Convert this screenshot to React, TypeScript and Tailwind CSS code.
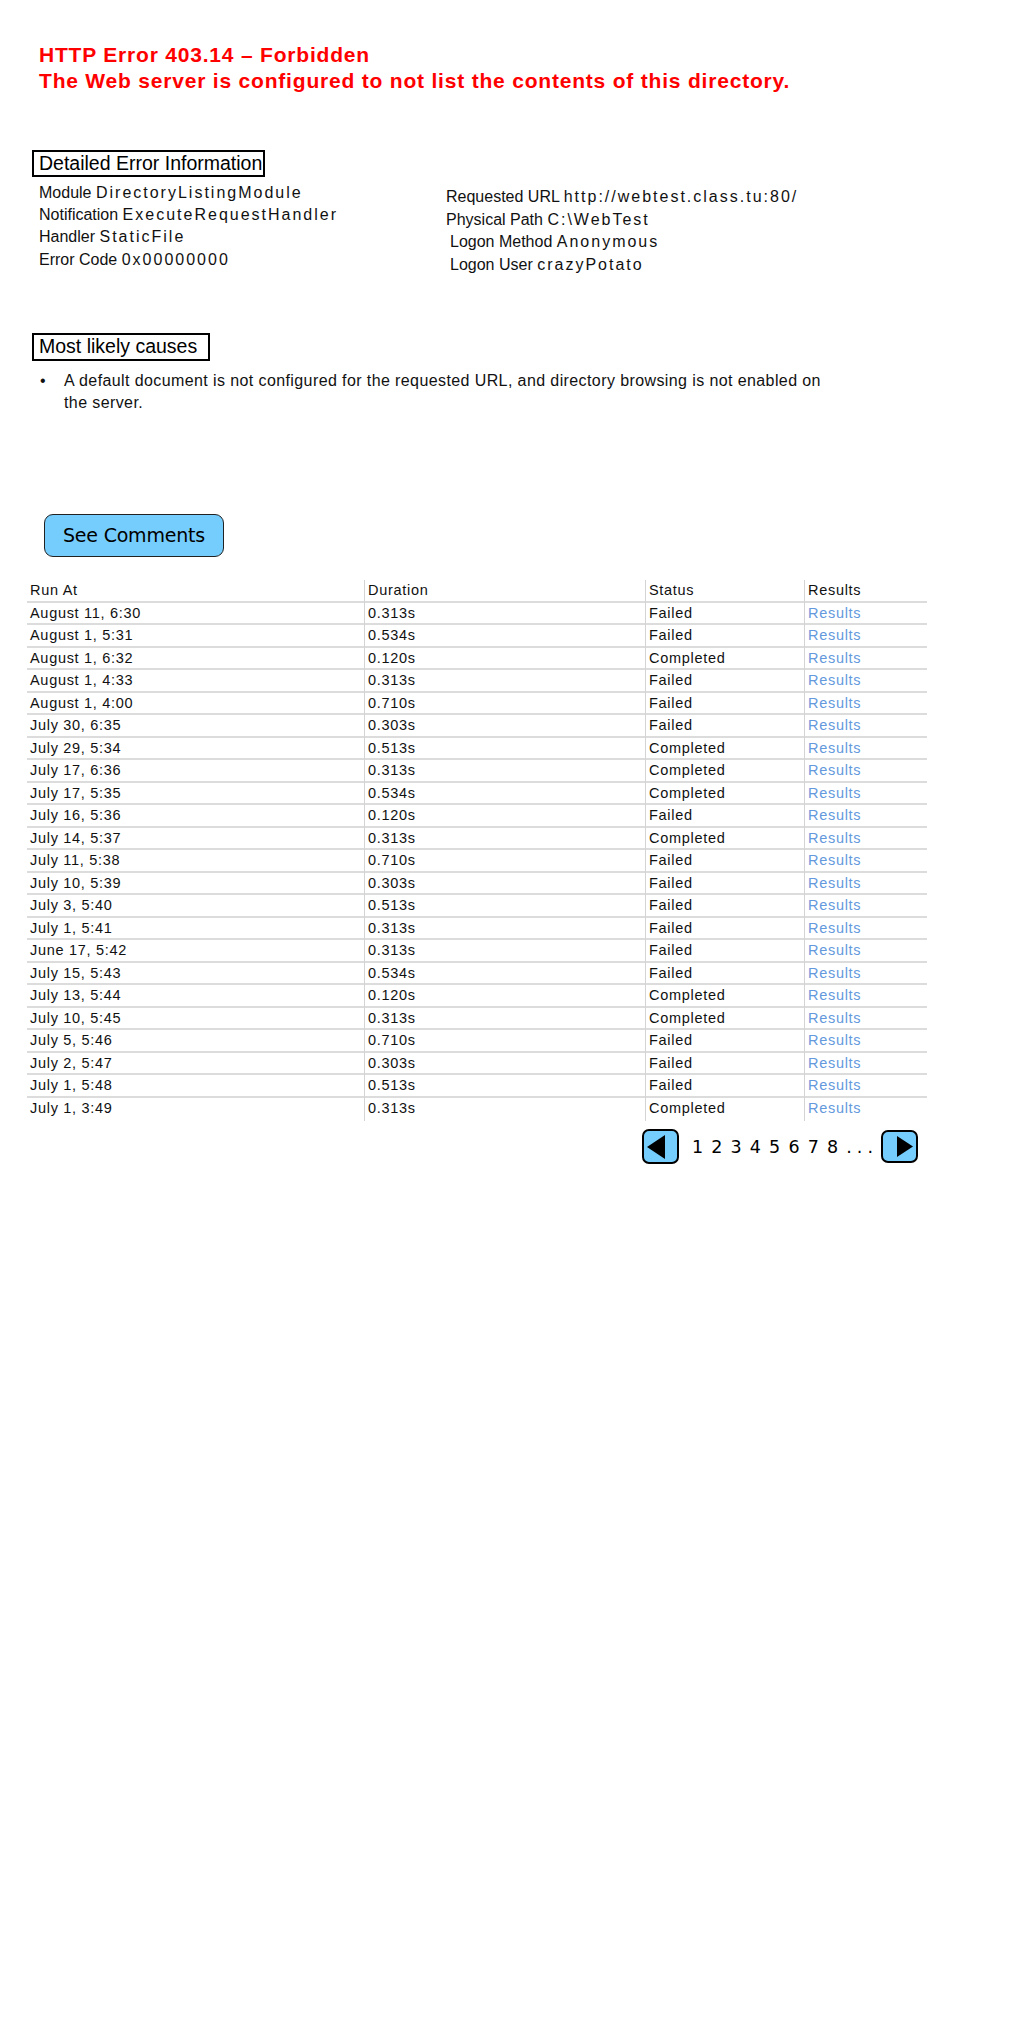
import React from "react";

const rows: [string, string, string][] = [
  ["August 11, 6:30", "0.313s", "Failed"],
  ["August 1, 5:31", "0.534s", "Failed"],
  ["August 1, 6:32", "0.120s", "Completed"],
  ["August 1, 4:33", "0.313s", "Failed"],
  ["August 1, 4:00", "0.710s", "Failed"],
  ["July 30, 6:35", "0.303s", "Failed"],
  ["July 29, 5:34", "0.513s", "Completed"],
  ["July 17, 6:36", "0.313s", "Completed"],
  ["July 17, 5:35", "0.534s", "Completed"],
  ["July 16, 5:36", "0.120s", "Failed"],
  ["July 14, 5:37", "0.313s", "Completed"],
  ["July 11, 5:38", "0.710s", "Failed"],
  ["July 10, 5:39", "0.303s", "Failed"],
  ["July 3, 5:40", "0.513s", "Failed"],
  ["July 1, 5:41", "0.313s", "Failed"],
  ["June 17, 5:42", "0.313s", "Failed"],
  ["July 15, 5:43", "0.534s", "Failed"],
  ["July 13, 5:44", "0.120s", "Completed"],
  ["July 10, 5:45", "0.313s", "Completed"],
  ["July 5, 5:46", "0.710s", "Failed"],
  ["July 2, 5:47", "0.303s", "Failed"],
  ["July 1, 5:48", "0.513s", "Failed"],
  ["July 1, 3:49", "0.313s", "Completed"],
];

export default function App() {
  return (
    <div className="min-h-[2040px] bg-white text-[#111] font-['Liberation_Sans',Arial,sans-serif] pt-[42px]">
      {/* Error heading */}
      <div className="ml-[39px] text-[21px] leading-[26px] font-bold tracking-[0.8px] text-[#ff0000]">
        <div>HTTP Error 403.14 – Forbidden</div>
        <div>The Web server is configured to not list the contents of this directory.</div>
      </div>

      {/* Detailed error information */}
      <SectionBox title="Detailed Error Information" className="mt-[56px] ml-[32px] w-[233px]" />
      <div className="flex mt-[5px] text-[16px]">
        <div className="ml-[39px] w-[407px] leading-[22.2px]">
          <InfoLine label="Module" value="DirectoryListingModule" />
          <InfoLine label="Notification" value="ExecuteRequestHandler" />
          <InfoLine label="Handler" value="StaticFile" />
          <InfoLine label="Error Code" value="0x00000000" />
        </div>
        <div className="mt-[4px] leading-[22.7px]">
          <InfoLine label="Requested URL" value="http://webtest.class.tu:80/" />
          <InfoLine label="Physical Path" value="C:\WebTest" />
          <InfoLine label="Logon Method" value="Anonymous" className="pl-[4px]" />
          <InfoLine label="Logon User" value="crazyPotato" className="pl-[4px]" />
        </div>
      </div>

      {/* Most likely causes */}
      <SectionBox title="Most likely causes" className="mt-[56px] ml-[32px] w-[178px] h-[28px]" />
      <div className="flex mt-[9px] text-[16px] leading-[22px] tracking-[0.4px]">
        <span className="ml-[40px] w-[24px]">•</span>
        <p className="w-[775px]">
          A default document is not configured for the requested URL, and directory browsing is not enabled on the server.
        </p>
      </div>

      <button className="mt-[100px] ml-[44px] w-[180px] h-[43px] rounded-[9px] border-[1.5px] border-[#222] bg-[#75cdfd] text-[19px] tracking-[-0.2px] text-black font-['DejaVu_Sans',Verdana,sans-serif]">
        See Comments
      </button>

      {/* Runs table */}
      <div className="mt-[23px] ml-[27px] w-[900px] text-[14.5px] tracking-[0.7px] text-[#111]">
        <div className="grid grid-cols-[337px_281px_159px_123px] h-[23px] border-b-2 border-[#dcdcdc]">
          <Cell first>Run At</Cell>
          <Cell>Duration</Cell>
          <Cell>Status</Cell>
          <Cell>Results</Cell>
        </div>
        {rows.map(([at, dur, status], i) => (
          <div
            key={i}
            className={
              "grid grid-cols-[337px_281px_159px_123px] h-[22.5px] " +
              (i < rows.length - 1 ? "border-b-2 border-[#dcdcdc]" : "")
            }
          >
            <Cell first>{at}</Cell>
            <Cell>{dur}</Cell>
            <Cell>{status}</Cell>
            <Cell>
              <span className="text-[#6499dd]">Results</span>
            </Cell>
          </div>
        ))}
      </div>

      {/* Pagination */}
      <div className="mt-[9px] ml-[27px] w-[900px] flex justify-end items-center pr-[9px]">
        <button className="w-[37px] h-[35px] rounded-[7px] border-2 border-black bg-[#75cdfd] flex items-center justify-start pl-[3px]">
          <svg width="18" height="24" viewBox="0 0 18 24">
            <polygon points="18,0 18,24 0,12" fill="#000" />
          </svg>
        </button>
        <span className="ml-[13px] text-[17.5px] tracking-[1.3px] text-black font-['DejaVu_Sans',Verdana,sans-serif]">
          1 2 3 4 5 6 7 8 <span className="tracking-[5px]">...</span>
        </span>
        <button className="ml-[3px] w-[37px] h-[33px] rounded-[7px] border-2 border-black bg-[#75cdfd] flex items-center justify-end pr-[3px]">
          <svg width="16" height="21" viewBox="0 0 16 21">
            <polygon points="0,0 16,10.5 0,21" fill="#000" />
          </svg>
        </button>
      </div>
    </div>
  );
}

function SectionBox({ title, className = "" }: { title: string; className?: string }) {
  return (
    <div className={"h-[27px] border-2 border-black px-[5px] text-[19.5px] leading-[23px] text-black whitespace-nowrap " + className}>
      {title}
    </div>
  );
}

function InfoLine({ label, value, className = "" }: { label: string; value: string; className?: string }) {
  return (
    <div className={"whitespace-nowrap " + className}>
      {label} <span className="tracking-[2px]">{value}</span>
    </div>
  );
}

function Cell({ children, first }: { children: React.ReactNode; first?: boolean }) {
  return (
    <div className={"flex items-center pb-[1px] " + (first ? "pl-[3px]" : "pl-[3px] border-l border-[#d4d4d4]")}>
      {children}
    </div>
  );
}
